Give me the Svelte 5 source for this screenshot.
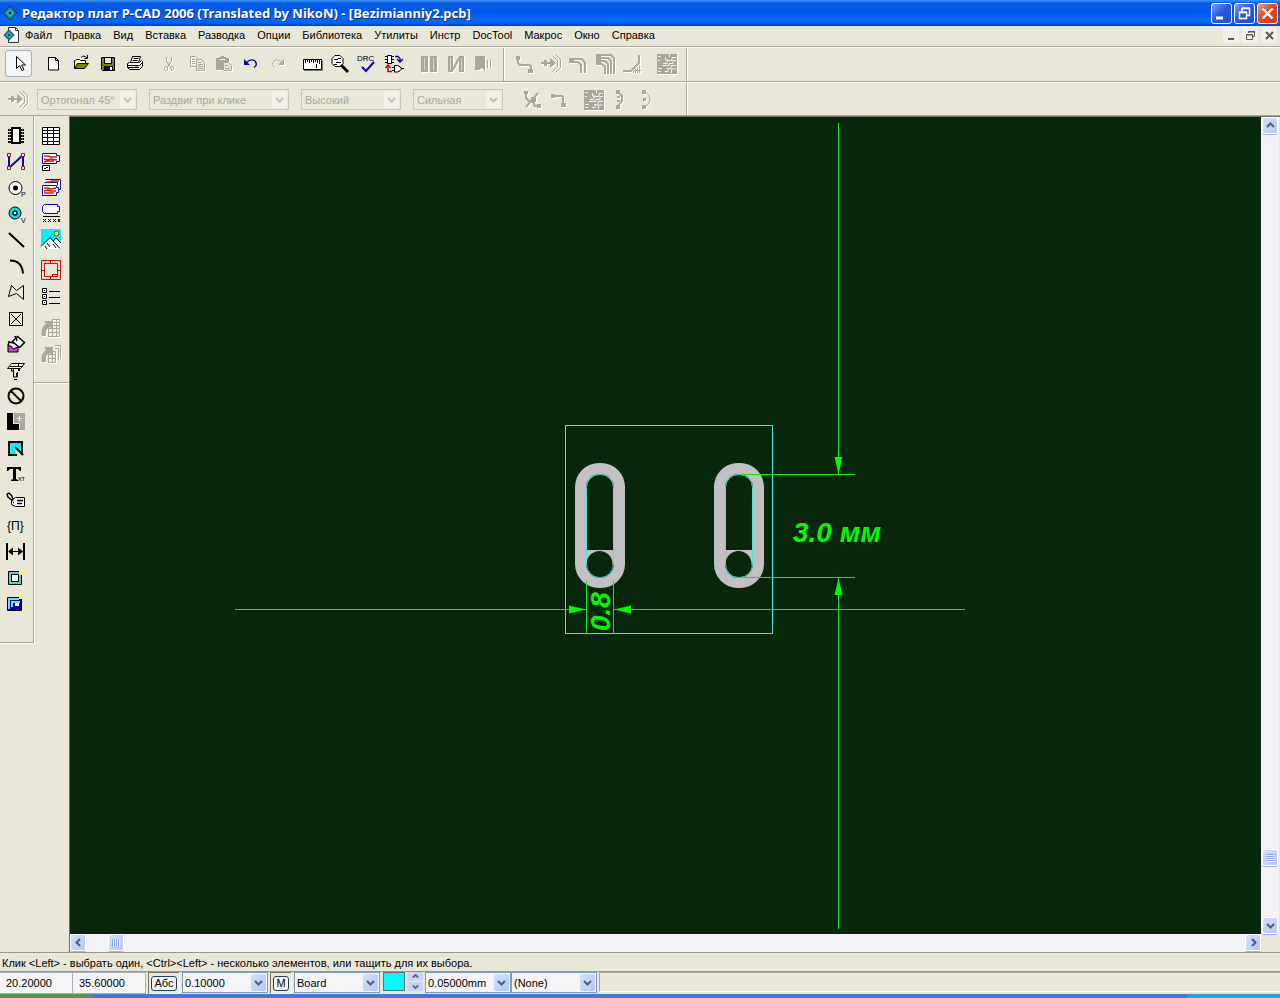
<script lang="ts">
  /** One stroke or filled area of an icon: path data, fill, stroke, stroke width. */
  type Shape = [d: string, fill?: string, stroke?: string, width?: number];
  interface Tool {
    name: string;
    shapes: Shape[];
    disabled?: boolean;
    active?: boolean;
    /** Small lettering inside the icon: x, baseline, size, text. */
    caption?: [number, number, number, string];
  }

  const K = '#000';
  const G = '#aaa899';
  const N = 'none';
  const B = '#0808a8';

  const menu = [
    'Файл', 'Правка', 'Вид', 'Вставка', 'Разводка', 'Опции', 'Библиотека',
    'Утилиты', 'Инстр', 'DocTool', 'Макрос', 'Окно', 'Справка',
  ];

  const pushShapes: Shape[] = [
    ['M0 9h3v-2h3v2h3v-4l6 5-6 5v-4h-3v2h-3v-2h-3z', G, N],
    ['M11.5 2.5l5 5v6l-5 5M14.5 1.5l5 5v8l-5 5', N, G],
  ];
  const boardShapes: Shape[] = [
    ['M0 1h20v20h-20z', G, N],
    ['M1 3.5h3M1 7.5h2M1 15.5h4M1 18.5h3M12.5 1v3M8.5 4v3h3M6 10.5h4v-3h5v-3h4M5 12.5h7v-2h4v-3h3M10 15.5h4v-3h5M8 18.5h3v-3M14.5 20v-4h4', N, '#f2f0e6'],
  ];

  const mainTools: Tool[][] = [
    [
      { name: 'Выбор', active: true, shapes: [['M8.5 3.5v12l3-3 2.500 5 2-1-2.500-4.500h4z', '#fff', K]] },
    ],
    [
      { name: 'Новый', shapes: [['M5.500 4.500h7l3 3v9.500h-10z', '#fff', K], ['M12.500 4.500v3h3', N, K]] },
      {
        name: 'Открыть',
        shapes: [
          ['M4.500 15.500v-8h1l1-1h3l1 1h5v3', '#ffffb0', K],
          ['M4.500 15.500l3-5h11l-4 5z', '#808000', K],
          ['M11 4.500q3-3 6 .5M17.500 2v3.500h-3', N, K],
        ],
      },
      {
        name: 'Сохранить',
        shapes: [
          ['M4.500 4.500h13v13h-12l-1-1z', '#808000', K],
          ['M7.500 4.500h7v6h-7z', '#e8e6d8', K],
          ['M7 13h9v4h-9z', K, N],
          ['M13 14h2v3h-2z', '#fff', N],
        ],
      },
      {
        name: 'Печать',
        shapes: [
          ['M6.500 9.500l2-6h8l-2 6', '#fff', K],
          ['M9.500 5.500h5M8.500 7.500h5', N, K],
          ['M3.500 10.500l2-1h10l2-2 1 1v5l-3 3h-10l-2-2z', '#fff', K],
          ['M3.500 12.500h12l3-3M4 14.500h11', N, K],
          ['M11 13.500h3', N, '#c0b000'],
        ],
      },
    ],
    [
      { name: 'Вырезать', disabled: true, shapes: [['M7.500 4v4l4 6M12.500 4v4l-4 6', N, G], ['M6.500 13.500l2 1v2l-1 1h-1l-1-1v-2zM11.500 14.500l2-1 1 1v2l-1 1h-1z', N, G]] },
      { name: 'Копировать', disabled: true, shapes: [['M4.500 3.500h5l2 2v8h-7z', N, G], ['M10.500 6.500h5l3 3v8h-8z', '#e9e7d8', G], ['M6 6.500h3M6 8.500h3M6 10.500h3M12 9.500h3M12 11.500h5M12 13.500h5M12 15.500h5', N, G]] },
      { name: 'Вставить', disabled: true, shapes: [['M3 5h3v-1h2v-1h3v1h2v1h3v12h-13z', G, N], ['M7 6.500h5', N, '#f2f0e6'], ['M10.500 9.500h5l3 3v5h-8z', '#e9e7d8', G], ['M12 12.500h3M12 15.500h5', N, G]] },
      { name: 'Отменить', shapes: [['M6 10q5-5 9-2 3 4-1 6.500', N, B, 1.4], ['M4 6v6h6z', B, N]] },
      { name: 'Повторить', disabled: true, shapes: [['M15 10q-5-5-8-2-3 4 1 6.500', N, G], ['M17 6v6h-6z', G, N]] },
    ],
    [
      { name: 'Линейка', shapes: [['M2 17.500h18.500v-10', N, '#777'], ['M1.500 6.500h18v10h-18z', '#fff', K], ['M3.500 7v3M5.500 7v2M7.500 7v3M9.500 7v2M11.500 7v3M13.500 7v2M15.500 7v3M17.500 7v4M14.500 11v4', N, K]] },
      { name: 'Масштаб', shapes: [['M6 2.500h5l3 3v5l-3 3h-5l-3-3v-5z', '#fff', K], ['M5 6.500h4M7 9.500h5M9 5.500h3M5 11.500h3', N, K], ['M12 12l7 7', N, K, 3]] },
      { name: 'DRC', caption: [1, 8, 8, 'DRC'], shapes: [['M6 14l4 4 8-9', N, B, 2]] },
      {
        name: 'Обмен',
        shapes: [
          ['M4.500 2.500h4v8h-4z', '#fff', K],
          ['M2 3.500h2M2 6.500h2M2 9.500h2M9 3.500h2M9 6.500h2M9 9.500h2', N, K],
          ['M12 3.500h3l2 2v3M14 6l3 3 3-3', N, B, 1.4],
          ['M9 18.500h-4v-5M2.500 15l2.500-3 3 3', N, '#c00000', 1.4],
          ['M11.500 12.500h3q4 1 4 3.500-1 2-4 3h-3z', '#fff', K],
          ['M9 14.500h2M9 17.500h2M18 15.500h3', N, K],
        ],
      },
    ],
    [
      { name: 'Пары', disabled: true, shapes: [['M3 3h7v16h-7zM12 3h7v16h-7z', G, N], ['M6.500 5v12M15.500 5v12', N, '#d8d6c8']] },
      { name: 'Цепи', disabled: true, shapes: [['M3 3h5v16h-5zM14 3h5v16h-5z', G, N], ['M5.500 5v12M16.500 5v12', N, '#d8d6c8'], ['M8 17l6-12', N, G, 2]] },
      { name: 'Метка', disabled: true, shapes: [['M3 3h10v15l-3-3-3 2-4 0z', G, N], ['M15.500 7v8M18.500 7v8', N, G]] },
    ],
  ];

  const routeTools: Tool[][] = [
    [
      { name: 'Трасса', disabled: true, shapes: [['M4 5v5l2 2h9l2 1v5', N, G, 2], ['M2 3h4v4h-4zM14 16h5v4h-5z', G, N]] },
      { name: 'Раздвиг', disabled: true, shapes: pushShapes },
      { name: 'Шина', disabled: true, shapes: [['M1 5h5v5h-5z', G, N], ['M5 6h9l3 4v10M5 9h5l3 3v8', N, G, 2]] },
      { name: 'Веер', disabled: true, shapes: [['M1 1h5v11h-5z', G, N], ['M5 2h11l3 3v16M5 5h8l3 3v13M5 8h5l3 3v10M5 11h2l3 3v7', N, G, 2]] },
      { name: 'Скругление', disabled: true, shapes: [['M1 18h8l8-8v-8', N, G, 2], ['M11.500 18v2M13.500 16v4M15.500 14v6M17.500 12v8M12 17.500h7', N, G]] },
    ],
    [{ name: 'Автотрассировка', disabled: true, shapes: boardShapes }],
  ];

  const pushTool: Tool = { name: 'Режим раздвига', disabled: true, shapes: pushShapes };
  const combos = [
    { name: 'Режим', value: 'Ортогонал 45°', width: 'w100' },
    { name: 'Способ', value: 'Раздвиг при клике', width: 'w140' },
    { name: 'Приоритет', value: 'Высокий', width: 'w100' },
    { name: 'Гладкость', value: 'Сильная', width: 'w90' },
  ];
  const tuneTools: Tool[][] = [
    [
      { name: 'Разорвать', disabled: true, shapes: [['M4 4v5l4 4h3l2 4h4M4 18l12-14', N, G, 2], ['M2 2h4v3h-4zM9 8h5v5h-5zM15 15h4v4h-4z', G, N]] },
      { name: 'Угол', disabled: true, shapes: [['M4 7h9l1 1v8', N, G, 2], ['M2 5h4v4h-4zM12 14h5v4h-5z', G, N]] },
    ],
    [
      { name: 'Плата', disabled: true, shapes: boardShapes },
      { name: 'Дуга внутрь', disabled: true, shapes: [['M7 3l4 4v5l-4 5M9 8h-3M9 12h-3', N, G, 2], ['M5 1h4v4h-4zM5 16h4v4h-4z', G, N]] },
      { name: 'Дуга', disabled: true, shapes: [['M6 3q6 2 6 7.500t-6 7', N, G], ['M4 1h4v4h-4zM4 16h4v4h-4zM5 9h3v3h-3z', G, N]] },
    ],
  ];

  const placeTools: Tool[][] = [
    [
      { name: 'Компонент', shapes: [['M7 3h8v15h-8z', '#fff', K, 2], ['M3 4h3v2h-3zM3 7h3v2h-3zM3 10h3v2h-3zM3 13h3v2h-3zM3 16h3v2h-3zM16 4h3v2h-3zM16 7h3v2h-3zM16 10h3v2h-3zM16 13h3v2h-3zM16 16h3v2h-3z', K, N], ['M4 5h1M4 8h1M4 11h1M4 14h1M17 5h1M17 8h1M17 11h1M17 14h1', N, '#888']] },
      { name: 'Соединение', shapes: [['M4 17v-12M4 17l14-13M18 4v13', N, B, 2], ['M2.500 2.500h3v3h-3zM2.500 15.500h3v3h-3zM16.500 2.500h3v3h-3zM16.500 15.500h3v3h-3z', '#e9e7d8', '#8b2020']] },
      { name: 'Контактная площадка', caption: [16, 20, 7, 'P'], shapes: [['M4 11a6.500 6.500 0 1 0 13 0a6.500 6.500 0 1 0-13 0', '#fff', K], ['M8 11a2.500 2.500 0 1 0 5 0a2.500 2.500 0 1 0-5 0', K, N]] },
      { name: 'Переход', caption: [16, 20, 7, 'V'], shapes: [['M4 10a6 6 0 1 0 12 0a6 6 0 1 0-12 0', '#00dce8', K], ['M8 10a2 2 0 1 0 4 0a2 2 0 1 0-4 0', '#fff', K, 1.5]] },
      { name: 'Линия', shapes: [['M4 4l15 14', N, K, 2]] },
      { name: 'Дуга', shapes: [['M5 5.500q12 0 13 13', N, K, 2]] },
      { name: 'Полигон', shapes: [['M3.500 15.500l3-11 5 5 7-5v14l-7-6z', N, K]] },
      { name: 'Точка', shapes: [['M4.500 5.500h13v13h-13zM6 7l10 10M16 7l-10 10', N, K]] },
      { name: 'Заливка', shapes: [['M3 13h3l2 3 5-2v5h-10z', '#e030e0', K], ['M7.500 8.500l5-5 7 6-5 5z', '#fff', K, 1.5], ['M9 10l-5-1-1 4M10 3l2 5', N, K, 1.5]] },
      { name: 'Вырез', shapes: [['M6.500 4.500h13l-4 5h-13z', '#fff', K], ['M8.500 7.500h5v-3M8.500 10v8h4v-5M9 20.500h3M13 7.500h5M5 7.500h4M6.500 10v2h2', N, K], ['M14 10v2M12 14v4', N, K, 2]] },
      { name: 'Запрет', shapes: [['M3.500 11a7.500 7.500 0 1 0 15 0a7.500 7.500 0 1 0-15 0M6 6l10 10', N, K, 2]] },
      { name: 'Комната', shapes: [['M2 2h6v11h6v6h-12z', K, N], ['M9 2h11v17h-5v-7h-6z', G, N], ['M12 7.500h5M14.500 5v5', N, '#fff']] },
      { name: 'Область', shapes: [['M4 4h14v14l-8-8 1 8h-7z', '#00f0f8', N], ['M17 18v-13h-13v13h8M10 10l8 8', N, K, 2]] },
      { name: 'Текст', caption: [13, 18, 7, 'xт'], shapes: [['M2 4h14v4h-1l-2-2h-2v10l2 1v1h-7v-1l2-1v-10h-3l-2 2h-1z', K, N]] },
      { name: 'Атрибут', shapes: [['M6.500 11.500l4-3h9v9h-9l-4-2z', '#fff', K], ['M12 11.500h6M12 14.500h5M8 13.500h1M8 12l-5-4-1-3 2-1 3 3 1 4', N, K, 1.4]] },
      { name: 'Поле', caption: [2, 15, 12, '{Π}'], shapes: [] },
      { name: 'Размер', shapes: [['M2 2v17M19 2v17', N, K, 2], ['M4 10.500h13', N, K], ['M3 10.500l5-4v8zM18 10.500l-5-4v8z', K, N]] },
      { name: 'Новая область', shapes: [['M3.500 4.500h13v13h-13z', '#70c8b8', K], ['M6.500 7.500h7v7h-7z', '#f4f2e8', K], ['M14 2h6v6h-6z', '#f2ee98', N]] },
      { name: 'Слой области', shapes: [['M2.500 4.500h14v13h-14z', '#0808a0', K], ['M4 16v-10h10M7 14v-5h8', N, '#70e0e0', 2], ['M10 10h4v3h-4z', '#fff', N], ['M14 1h5v5h-5z', '#f2ee98', N]] },
    ],
  ];

  const documentTools: Tool[][] = [
    [
      { name: 'Таблица', shapes: [['M2.500 2.500h17v17h-17z', '#fff', K], ['M3 5.500h16M3 8.500h16M3 12.500h16M3 16.500h16M7.500 3v16M13.500 3v16', N, K]] },
      { name: 'Деталь', shapes: [['M2.500 2.500h14v2h3v6h-3v2h-14z', '#fff', B], ['M4 5l4 0 3 1 6 0M4 8l3 1 4-1 6 1M4 11l4-1 6 0', N, '#d01818', 1.5], ['M2.500 14.500h7v5h-7z', '#fff', K], ['M4 17.500h2M6 16.500h2', N, K]] },
      { name: 'Набор плат', shapes: [['M5.500 2.500h15v10h-4', '#fff', B], ['M2.500 8.500h14v2h2v5h-2v3h-14z', '#fff', B], ['M4.500 5.500h13v3', N, B], ['M7 5l3 0 2-1h7M4 11l4 0 3 1 5-1M4 14l4-1 3 1 5 0M4 16h10', N, '#d01818', 1.5]] },
      { name: 'Заметка', shapes: [['M4.500 1.500h13v2h2v5h-2v2h-13l-2-2v-5z', '#f4f3f6', B], ['M3 13.500h17', N, K], ['M3 16l3 3M6 16l-3 3M8 16l3 3M11 16l-3 3M13 16l3 3M16 16l-3 3M18 16l2 3M20 16l-2 3', N, K]] },
      { name: 'Рисунок', shapes: [['M1 0h20v20h-20z', '#00f0ff', N], ['M1 17l9-8 4 3 3-2 4 4v6h-20z', '#fff', N], ['M1 17.500l9-9 10 11M13 12l3-3 5 5M7 14l3 4M13 15l3 4M5 17l2 3', N, K], ['M14 4.500a2.500 2.500 0 1 0 5 0a2.500 2.500 0 1 0-5 0', '#ffe818', '#555']] },
    ],
    [
      { name: 'Рамка', shapes: [['M1.500 .5h19v19h-19zM4.500 3.500h13v13h-13z', '#f0d8cc', '#cc1010'], ['M5 4h12v12h-12z', '#e9e7d8', N], ['M10.500 1v2M2 10.500h2M18 10.500h2M10.500 17v2M12 14.500h5M12.500 15v2', N, '#cc1010']] },
      { name: 'Список', shapes: [['M2.500 2.500h4v4h-4zM2.500 8.500h4v4h-4zM2.500 14.500h4v4h-4z', '#fff', K], ['M4 4.500h1M4 10.500h1M4 16.500h1M9 5.500h11M9 11.500h11M9 17.500h11', N, K]] },
    ],
    [
      { name: 'Обновить таблицу', disabled: true, shapes: [['M8.500 8.500h11v11h-11z', '#f2f0e6', G], ['M9 11.500h10M9 15.500h10M12.500 2v17M16.500 2v17M19.500 2v17M12 2.500h8M12 5.500h8', N, G], ['M2 19q-2-8 4-12l-2-3h9v9l-3-3q-5 2-4 9z', G, N]] },
      { name: 'Обновить всё', disabled: true, shapes: [['M8.500 8.500h7v11h-7zM15 5.500h3.500v11M15 2.500h5.500v13', '#f2f0e6', G], ['M9 11.500h6M9 15.500h6M12.500 9v10', N, G], ['M2 19q-2-8 4-12l-2-3h9v9l-3-3q-5 2-4 9z', G, N]] },
    ],
  ];

  const pads = [0, 139];
  const hint = 'Клик <Left> - выбрать один, <Ctrl><Left> - несколько элементов, или тащить для их выбора.';
</script>

{#snippet toolButton(tool: Tool)}
  <button class="tool" class:active={tool.active} disabled={tool.disabled} aria-label={tool.name}>
    <svg class="icon" viewBox="0 0 21 21" aria-hidden="true">
      {#each tool.shapes as [d, fill = 'none', stroke = 'none', width = 1]}
        <path {d} {fill} {stroke} stroke-width={width} />
      {/each}
      {#if tool.caption}
        <text x={tool.caption[0]} y={tool.caption[1]} font-size={tool.caption[2]}>{tool.caption[3]}</text>
      {/if}
    </svg>
  </button>
{/snippet}

{#snippet toolGroups(groups: Tool[][])}
  {#each groups as group}
    <div class="group">
      {#each group as tool}
        {@render toolButton(tool)}
      {/each}
    </div>
  {/each}
{/snippet}

{#snippet chevron(d: string)}
  <svg class="chevron" viewBox="0 0 9 9" aria-hidden="true"><path {d} /></svg>
{/snippet}

{#snippet combo(name: string, value: string, width: string, disabled: boolean)}
  <span class="combo {width}" class:disabled>
    <select aria-label={name} {disabled}><option>{value}</option></select>
    <span class="drop">{@render chevron('M1 3l3.5 3.5L8 3')}</span>
  </span>
{/snippet}

{#snippet logo()}
  <path d="M8 1l7 7-7 7-7-7z" fill="#127c94" stroke="#0a4458" />
  <path d="M8 4l4 4-4 4-4-4z" fill="#3cb8c0" />
  <path d="M8 6l2 2-2 2-2-2z" fill="#06303c" />
{/snippet}

<div class="window">
  <header class="titlebar">
    <svg class="logo" viewBox="0 0 16 16" aria-hidden="true">{@render logo()}</svg>
    <h1>Редактор плат P-CAD 2006 (Translated by NikoN) - [Bezimianniy2.pcb]</h1>
    <div class="caption-buttons">
      <button aria-label="Свернуть"><svg viewBox="0 0 19 19"><path d="M4 14h7" stroke-width="3" /></svg></button>
      <button aria-label="Восстановить"><svg viewBox="0 0 19 19"><path d="M7 7V4.500h7.500v7H12M4.500 8.500h7v6h-7zM4 8h8M7 4h8" stroke-width="1.500" /></svg></button>
      <button class="close" aria-label="Закрыть"><svg viewBox="0 0 19 19"><path d="M4.500 4.500l10 10M14.500 4.500l-10 10" stroke-width="2.400" /></svg></button>
    </div>
  </header>

  <nav class="menubar">
    <svg class="doc-logo" viewBox="0 0 16 16" aria-hidden="true">
      <path d="M4.500 .5h7l3 3v12h-10z" fill="#fff" stroke="#333" />
      <path d="M11.500 .5v3h3" fill="none" stroke="#333" />
      <g transform="translate(-1 2) scale(.75)">{@render logo()}</g>
    </svg>
    {#each menu as item}
      <button class="menu-item">{item}</button>
    {/each}
    <div class="doc-buttons">
      <button aria-label="Свернуть документ"><svg viewBox="0 0 11 11"><path d="M2 9h6" stroke-width="2" /></svg></button>
      <button aria-label="Восстановить документ"><svg viewBox="0 0 11 11"><path d="M3.500 3V1.500h6v5H8M1.500 4.500h6v5h-6zM1 5h7M3 2h7" /></svg></button>
      <button aria-label="Закрыть документ"><svg viewBox="0 0 11 11"><path d="M2 2l7 7M9 2l-7 7" stroke-width="2" /></svg></button>
    </div>
  </nav>

  <div class="toolbar-row">
    <div class="toolbar">{@render toolGroups(mainTools)}</div>
    <div class="toolbar">{@render toolGroups(routeTools)}</div>
  </div>

  <div class="toolbar-row short">
    <div class="toolbar options">
      {@render toolButton(pushTool)}
      <div class="combos">
        {#each combos as { name, value, width }}
          {@render combo(name, value, width, true)}
        {/each}
      </div>
      {@render toolGroups(tuneTools)}
    </div>
  </div>

  <main class="workspace">
    <aside class="side">{@render toolGroups(placeTools)}</aside>
    <aside class="side wide-gaps">{@render toolGroups(documentTools)}</aside>

    <section class="view">
      <svg class="board" aria-label="Плата">
        <rect class="outline" x="495.500" y="308.500" width="207" height="208" />
        {#each pads as dx}
          <g transform="translate({dx} 0)">
            <rect class="copper" x="505" y="346" width="50" height="125" rx="24" />
            <rect class="hole" x="516" y="357" width="28" height="104" rx="14" />
            <rect class="copper" x="517" y="433" width="26" height="15" />
            <circle class="hole" cx="529.500" cy="447" r="13" />
            <rect class="slot" x="516.500" y="357.500" width="27" height="103" rx="13" />
          </g>
        {/each}
        <g class="dimension">
          <path d="M768.500 6v351M768.500 460v352M670 357.500h115M674 460.500h111" />
          <path d="M165 492.500h351M544 492.500h351M516.500 464v53M543.500 464v53" />
          <path class="arrow" d="M768.500 357l-4-17h8zM768.500 461l-4 17h8zM516 492.500l-17-4v8zM544 492.500l17-4v8z" />
          <text x="723" y="425">3.0 мм</text>
          <text transform="translate(540 514) rotate(-90)">0.8</text>
        </g>
      </svg>

      <div class="scroll vertical">
        <button aria-label="Вверх">{@render chevron('M1 6l3.5-3.5L8 6')}</button>
        <div class="track"><span class="thumb"></span></div>
        <button aria-label="Вниз">{@render chevron('M1 3l3.5 3.5L8 3')}</button>
      </div>
      <div class="scroll horizontal">
        <button aria-label="Влево">{@render chevron('M6 1L2.500 4.500L6 8')}</button>
        <div class="track"><span class="thumb"></span></div>
        <button aria-label="Вправо">{@render chevron('M3 1l3.500 3.500L3 8')}</button>
      </div>
    </section>
  </main>

  <footer>
    <p class="hint">{hint}</p>
    <div class="status">
      <input aria-label="X" value="20.20000" />
      <input aria-label="Y" value="35.60000" />
      <button class="toggle abs"><span>Абс</span></button>
      {@render combo('Сетка', '0.10000', 'w86', false)}
      <button class="toggle"><span>M</span></button>
      {@render combo('Слой', 'Board', 'w86', false)}
      <button class="swatch" aria-label="Цвет слоя"></button>
      <div class="spin">
        <button aria-label="Следующий слой">{@render chevron('M1 6l3.5-3.5L8 6')}</button>
        <button aria-label="Предыдущий слой">{@render chevron('M1 3l3.5 3.5L8 3')}</button>
      </div>
      <div class="pair">
        {@render combo('Ширина линии', '0.05000mm', 'w86', false)}
        {@render combo('Цепь', '(None)', 'w86', false)}
      </div>
      <output class="message"></output>
    </div>
  </footer>
  <div class="taskbar"><span class="start"></span><span class="tray"></span></div>
</div>

<style>
  :global(body) {
    margin: 0;
    background: #e9e7d8;
  }

  .window {
    display: flex;
    flex-direction: column;
    height: 100vh;
    overflow: hidden;
    background: #e9e7d8;
    color: #000;
    font: 11px/14px 'Liberation Sans', Arial, sans-serif;
  }

  button,
  input,
  select {
    box-sizing: border-box;
    margin: 0;
    padding: 0;
    border: 0;
    border-radius: 0;
    background: none;
    color: inherit;
    font: inherit;
  }

  svg {
    display: block;
    flex-shrink: 0;
  }

  .titlebar {
    display: flex;
    align-items: center;
    box-sizing: border-box;
    height: 26px;
    padding: 0 2px;
    background: linear-gradient(#3d94ff, #0a5ce4 12%, #0056e4 45%, #0466fb 65%, #0464f6 88%, #0040b8);
  }

  .logo,
  .doc-logo {
    width: 16px;
    height: 16px;
  }

  h1 {
    flex: 1;
    margin: 0 0 0 4px;
    color: #fff;
    font: bold 13px/20px 'Noto Sans', sans-serif;
    text-shadow: 1px 1px #0a2d88;
    white-space: nowrap;
  }

  .caption-buttons {
    display: flex;
    gap: 2px;
  }

  .caption-buttons button {
    width: 21px;
    height: 21px;
    border: 1px solid #fff;
    border-radius: 3px;
    background: linear-gradient(135deg, #7f9df5, #2c5be0 45%, #1f4cd0);
  }

  .caption-buttons .close {
    background: linear-gradient(135deg, #ee9a80, #dc4c24 45%, #c83c14);
  }

  .caption-buttons path {
    fill: none;
    stroke: #fff;
  }

  .menubar {
    display: flex;
    align-items: center;
    box-sizing: border-box;
    height: 21px;
    padding: 0 3px 2px 4px;
    border-bottom: 1px solid #aca899;
  }

  .menu-item {
    margin-right: 12px;
  }

  .doc-logo {
    margin-right: 5px;
  }

  .doc-buttons {
    display: flex;
    gap: 3px;
    margin-left: auto;
  }

  .doc-buttons button {
    display: grid;
    place-items: center;
    width: 16px;
    height: 16px;
    background: #f1f0ea;
  }

  .doc-buttons svg {
    width: 11px;
    height: 11px;
  }

  .doc-buttons path {
    fill: none;
    stroke: #5c5a50;
  }

  .toolbar-row {
    display: flex;
    box-sizing: border-box;
    height: 35px;
    border-top: 1px solid #fff;
    border-bottom: 1px solid #aca899;
  }

  .toolbar-row.short {
    height: 34px;
  }

  .toolbar {
    display: flex;
    gap: 8px;
    padding: 2px 7px 0 5px;
    border-right: 1px solid #aca899;
    box-shadow: 1px 0 #fff;
  }

  .toolbar + .toolbar {
    padding: 2px 5px 0 7px;
  }

  .group {
    display: flex;
  }

  .tool {
    display: grid;
    place-content: center;
    width: 27px;
    height: 27px;
  }

  .tool.active {
    border: 1px solid #9fb3c0;
    border-radius: 3px;
    background: #f4f3f6;
  }

  .icon {
    overflow: visible;
    width: 21px;
    height: 21px;
  }

  .icon text {
    font-family: 'Liberation Sans', Arial, sans-serif;
  }

  .tool:disabled .icon {
    filter: drop-shadow(1px 1px 0 #fff);
  }

  .toolbar.options {
    padding: 3px 24px 0 5px;
  }

  .combos {
    display: flex;
    gap: 12px;
    margin: 3px 8px 0 -3px;
  }

  .combo {
    display: grid;
    box-sizing: border-box;
    height: 21px;
    border: 1px solid #7f9db9;
    background: #f4f3f6;
  }

  .combo select,
  .combo .drop {
    grid-area: 1 / 1;
  }

  .combo select {
    width: 100%;
    padding: 0 18px 0 2px;
    appearance: none;
  }

  .combo .drop {
    display: grid;
    place-items: center;
    justify-self: end;
    width: 15px;
    margin: 1px;
    border-radius: 2px;
    background: linear-gradient(135deg, #d5e0fc, #b4c6f2);
    pointer-events: none;
  }

  .combo.disabled {
    border-color: #c9c7ba;
    background: #e9e7d8;
  }

  .combo.disabled select {
    padding-left: 3px;
    color: #aca899;
    opacity: 1;
  }

  .combo.disabled .drop {
    background: #f0efe8;
  }

  .combo.disabled .chevron {
    stroke: #c4c2b4;
  }

  .w86 {
    width: 86px;
  }

  .w90 {
    width: 90px;
  }

  .w100 {
    width: 100px;
  }

  .w140 {
    width: 140px;
  }

  .chevron {
    width: 9px;
    height: 9px;
    fill: none;
    stroke: #4d6185;
    stroke-width: 2;
  }

  .workspace {
    display: flex;
    flex: 1;
    min-height: 0;
    align-items: flex-start;
  }

  .side {
    box-sizing: border-box;
    width: 34px;
    padding: 6px 4px 26px 2px;
    border-right: 1px solid #aca899;
    border-bottom: 1px solid #aca899;
    box-shadow: 1px 1px #fff;
  }

  .side .group {
    flex-direction: column;
  }

  .side .tool {
    height: 26px;
  }

  .side.wide-gaps {
    display: flex;
    flex-direction: column;
    gap: 5px;
    width: 35px;
    padding: 6px 4px 16px 3px;
    border-right: 0;
  }

  .view {
    display: grid;
    flex: 1;
    grid-template: minmax(0, 1fr) 18px / minmax(0, 1fr) 18px;
    align-self: stretch;
    min-width: 0;
    padding-right: 1px;
    border-top: 1px solid #6f6d62;
    border-left: 1px solid #6f6d62;
  }

  .board {
    width: 100%;
    height: 100%;
    background: #08260a;
  }

  .outline,
  .slot {
    fill: none;
    stroke: #4ae4dc;
  }

  .copper {
    fill: #c2c0c2;
  }

  .hole {
    fill: #08260a;
  }

  .dimension {
    fill: none;
    stroke: #14e614;
  }

  .dimension .arrow,
  .dimension text {
    fill: #00fa00;
    stroke: none;
  }

  .dimension text {
    font: italic bold 28px 'Liberation Sans', Arial, sans-serif;
  }

  .scroll {
    display: flex;
    background: #f2f1f6;
  }

  .vertical {
    flex-direction: column;
  }

  .scroll button,
  .thumb {
    display: grid;
    flex-shrink: 0;
    place-items: center;
    box-sizing: border-box;
    width: 16px;
    height: 17px;
    margin: 0 1px;
    border: 1px solid #fff;
    border-radius: 2px;
    background: linear-gradient(135deg, #d5e0fc, #b4c6f2);
    box-shadow: 0 1px #a8b4cc;
  }

  .horizontal button,
  .horizontal .thumb {
    margin: 0;
  }

  .track {
    display: flex;
    flex: 1;
  }

  .vertical .track {
    flex-direction: column;
    justify-content: flex-end;
    padding-bottom: 51px;
  }

  .horizontal .track {
    padding-left: 22px;
  }

  .thumb::after {
    width: 8px;
    height: 8px;
    background: repeating-linear-gradient(#8ca8e8 0 1px, #e8eefc 1px 2px);
    content: '';
  }

  .horizontal .thumb::after {
    background: repeating-linear-gradient(90deg, #8ca8e8 0 1px, #e8eefc 1px 2px);
  }

  .hint {
    box-sizing: border-box;
    height: 19px;
    margin: 0;
    padding: 3px 2px 0;
    border-top: 1px solid #9a988c;
    white-space: nowrap;
  }

  .status {
    display: flex;
    gap: 2px;
    height: 22px;
    border-top: 1px solid #9a988c;
  }

  .status input {
    width: 73px;
    padding: 0 6px;
    border: 1px solid #aab4c0;
    border-left: 0;
    background: #f4f3f6;
  }

  .status input + input {
    margin-left: -2px;
  }

  .toggle {
    width: 22px;
    padding: 2px;
    border: 1px solid #77756a;
    border-right-color: #fff;
    border-bottom-color: #fff;
  }

  .toggle.abs {
    width: 32px;
  }

  .toggle span {
    display: block;
    border: 1px solid #24405c;
    border-radius: 3px;
    background: #f4f3f6;
    line-height: 13px;
  }

  .swatch {
    width: 22px;
    height: 19px;
    margin-left: 1px;
    border: 1px solid #56737c;
    background: #00fcff;
  }

  .spin {
    display: flex;
    flex-direction: column;
    gap: 1px;
    width: 16px;
  }

  .spin button {
    display: grid;
    place-items: center;
    height: 9px;
    border-radius: 2px;
    background: #c6d4f6;
  }

  .spin .chevron {
    height: 7px;
  }

  .pair {
    display: flex;
  }

  .message {
    flex: 1;
    height: 18px;
    border: 1px solid #aca899;
    border-right: 0;
    border-bottom-color: #fff;
  }

  .taskbar {
    display: flex;
    justify-content: space-between;
    height: 4px;
    background: #2f7fe8;
  }

  .start {
    width: 92px;
    border-radius: 0 4px 0 0;
    background: #48a048;
  }

  .tray {
    width: 93px;
    background: #18a4f0;
  }
</style>
